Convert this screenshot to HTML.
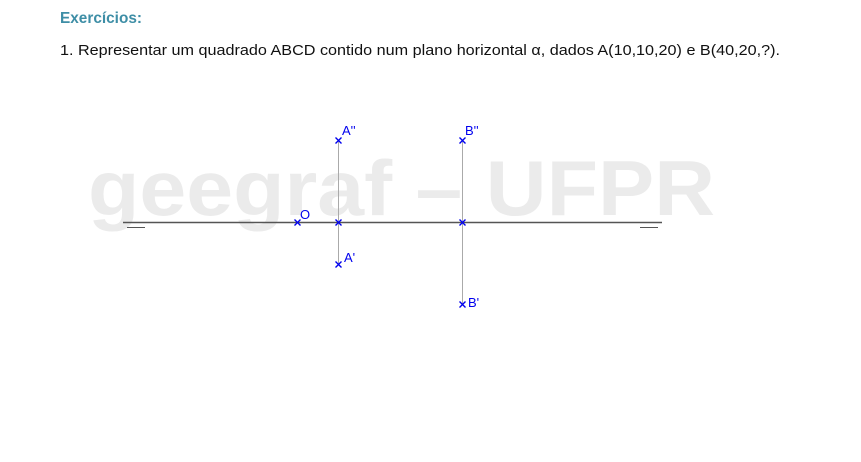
<!DOCTYPE html>
<html><head><meta charset="utf-8"><style>
html,body{margin:0;padding:0;background:#fff;width:861px;height:462px;overflow:hidden}
</style></head><body>
<svg width="861" height="462" xmlns="http://www.w3.org/2000/svg" font-family="Liberation Sans, sans-serif">
<text x="60" y="23" font-size="16" font-weight="bold" fill="#3e8ea6" textLength="82" lengthAdjust="spacingAndGlyphs">Exercícios:</text>
<text x="60" y="55" font-size="15" fill="#111" textLength="720" lengthAdjust="spacingAndGlyphs">1. Representar um quadrado ABCD contido num plano horizontal α, dados A(10,10,20) e B(40,20,?).</text>
<text x="88" y="215" font-size="78" font-weight="bold" fill="#ebebeb" textLength="627" lengthAdjust="spacingAndGlyphs">geegraf – UFPR</text>
<line x1="123" y1="222.5" x2="662" y2="222.5" stroke="#555" stroke-width="1.5"/>
<line x1="127" y1="227.5" x2="145" y2="227.5" stroke="#555" stroke-width="1"/>
<line x1="640" y1="227.5" x2="658" y2="227.5" stroke="#555" stroke-width="1"/>
<line x1="338.5" y1="140" x2="338.5" y2="264" stroke="#aaa" stroke-width="1"/>
<line x1="462.5" y1="140" x2="462.5" y2="304" stroke="#aaa" stroke-width="1"/>
<g stroke="#0000ee" stroke-width="1.4">
<path d="M294.5 219.5l6 6M300.5 219.5l-6 6"/>
<path d="M335.5 219.5l6 6M341.5 219.5l-6 6"/>
<path d="M459.5 219.5l6 6M465.5 219.5l-6 6"/>
<path d="M335.5 137.5l6 6M341.5 137.5l-6 6"/>
<path d="M459.5 137.5l6 6M465.5 137.5l-6 6"/>
<path d="M335.5 261.5l6 6M341.5 261.5l-6 6"/>
<path d="M459.5 301.5l6 6M465.5 301.5l-6 6"/>
</g>
<g fill="#0000ee" font-size="13">
<text x="300" y="219">O</text>
<text x="342" y="135">A''</text>
<text x="465" y="135">B''</text>
<text x="344" y="262">A'</text>
<text x="468" y="307">B'</text>
</g>
</svg>
</body></html>
